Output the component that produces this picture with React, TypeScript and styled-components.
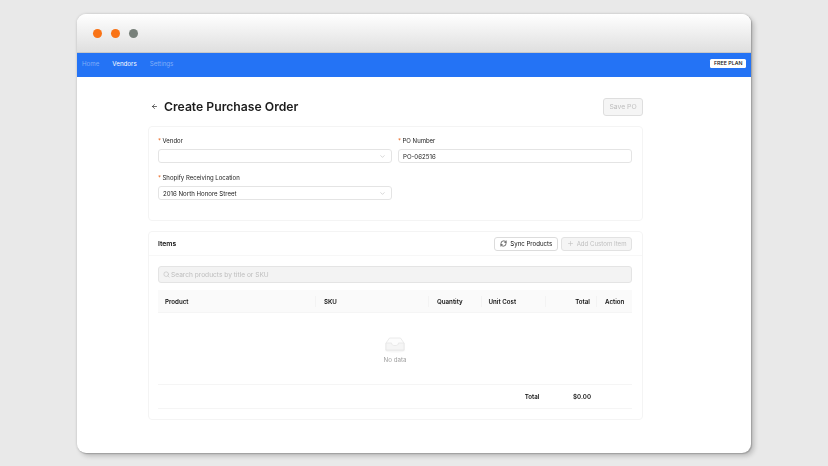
import React from "react";
import styled, { createGlobalStyle } from "styled-components";
import { ArrowLeft, ChevronDown, RefreshCw, Plus, Search } from "lucide-react";

const Global = createGlobalStyle`
  html, body { margin: 0; padding: 0; }
  body { width: 828px; height: 466px; overflow: hidden; background: #e9e9e9; font-family: Inter, "Liberation Sans", sans-serif; }
`;

const Stage = styled.div`
  width: 828px;
  height: 466px;
  padding: 14px 77px 13px;
  box-sizing: border-box;
  background: #e9e9e9;
`;
const Win = styled.div`
  height: 439px;
  border-radius: 9px;
  overflow: hidden;
  background: #fff;
  display: flex;
  flex-direction: column;
  filter: blur(0.3px);
  box-shadow: 1px 1px 1px #a0a0a0, 3px 3px 5px rgba(0, 0, 0, 0.2), 0 0 3px rgba(0, 0, 0, 0.18);
`;
const TitleBar = styled.div`
  height: 39px;
  flex: none;
  display: flex;
  align-items: center;
  gap: 9px;
  padding-left: 16px;
  box-sizing: border-box;
  background: linear-gradient(#ffffff, #dfdfdf);
  border-bottom: 1px solid #c8c8c8;
`;
const Dot = styled.span<{ $c: string }>`
  width: 9px;
  height: 9px;
  border-radius: 50%;
  background: ${(p) => p.$c};
`;
const Nav = styled.nav`
  height: 24px;
  flex: none;
  display: flex;
  align-items: center;
  padding: 0 5px 3px;
  box-sizing: border-box;
  background: #2473f5;
`;
const NavItem = styled.span<{ $active?: boolean }>`
  font-size: 6.2px;
  margin-right: 13px;
  color: ${(p) => (p.$active ? "#ffffff" : "rgba(255,255,255,0.42)")};
`;
const Plan = styled.span`
  margin-left: auto;
  background: #fff;
  color: #111;
  font-size: 5.3px;
  font-weight: 500;
  line-height: 9px;
  padding: 0 3.5px;
  border-radius: 1.5px;
`;
const Main = styled.main`
  width: 495px;
  margin-left: 71px;
  display: flex;
  flex-direction: column;
`;
const Head = styled.div`
  height: 49px;
  display: flex;
  align-items: center;
  gap: 6px;
  color: #1c1c1c;
  padding-top: 11px;
  padding-bottom: 1px;
  box-sizing: border-box;
`;
const Title = styled.h1`
  margin: 0;
  font-size: 12.2px;
  font-weight: 600;
  flex: 1;
`;
const Save = styled.button`
  width: 40px;
  height: 18px;
  padding: 0;
  font: 400 6.8px Inter, sans-serif;
  color: #bdbdbd;
  background: #f5f5f5;
  border: 1px solid #dedede;
  border-radius: 3px;
`;
const Card = styled.section`
  border: 1px solid #f4f4f4;
  border-radius: 4px;
  box-sizing: border-box;
`;
const FormCard = styled(Card)`
  height: 95px;
  padding: 8px 9px 9px;
  display: grid;
  grid-template-columns: 234px 234px;
  column-gap: 6px;
  grid-auto-rows: 37px;
`;
const Field = styled.div`
  display: flex;
  flex-direction: column;
  gap: 3px;
`;
const Label = styled.label`
  font-size: 6px;
  line-height: 11px;
  color: #222;
  &::before {
    content: "*";
    color: #e8590c;
    margin-right: 1.5px;
  }
`;
const Control = styled.div`
  height: 14px;
  border: 1px solid #e4e4e4;
  border-radius: 3px;
  box-sizing: border-box;
  display: flex;
  align-items: center;
  justify-content: space-between;
  padding: 0 5px 0 4px;
  font-size: 6.1px;
  color: #222;
  background: #fff;
`;
const ItemsCard = styled(Card)`
  margin-top: 10px;
  height: 189px;
`;
const ItemsHead = styled.div`
  height: 24px;
  padding: 0 10px 0 9px;
  display: flex;
  align-items: center;
  gap: 3px;
  box-sizing: border-box;
  border-bottom: 1px solid #f7f7f7;
`;
const ItemsTitle = styled.h2`
  margin: 0;
  flex: 1;
  font-size: 6.8px;
  font-weight: 600;
  color: #111;
`;
const Btn = styled.button<{ $off?: boolean }>`
  height: 14px;
  padding: 0 ${(p) => (p.$off ? "4.5px" : "5px")};
  display: flex;
  align-items: center;
  gap: 3px;
  font: 400 6.1px Inter, sans-serif;
  border-radius: 3px;
  border: 1px solid ${(p) => (p.$off ? "#e2e2e2" : "#dcdcdc")};
  background: ${(p) => (p.$off ? "#f5f5f5" : "#fff")};
  color: ${(p) => (p.$off ? "#c0c0c0" : "#111")};
`;
const Body = styled.div`
  padding: 10px 10px 0 9px;
`;
const SearchBox = styled.div`
  height: 17px;
  border: 1px solid #e4e4e4;
  border-radius: 3px;
  background: #f3f3f3;
  box-sizing: border-box;
  display: flex;
  align-items: center;
  gap: 1px;
  padding: 0 4px;
  font-size: 6.6px;
  color: #bdbdbd;
`;
const HeadRow = styled.div`
  margin-top: 7px;
  height: 23px;
  background: #fafafa;
  display: grid;
  grid-template-columns: 158px 113px 52.5px 64px 51.5px 35px;
  align-items: center;
  border-bottom: 1px solid #f5f5f5;
  box-sizing: border-box;
`;
const Th = styled.div<{ $right?: boolean; $last?: boolean; $pad?: number }>`
  height: 11px;
  line-height: 11px;
  font-size: 6.2px;
  font-weight: 600;
  color: #111;
  box-sizing: border-box;
  padding: 0 ${(p) => (p.$right ? "6px" : "0")} 0 ${(p) => (p.$right ? "0" : `${p.$pad ?? 8}px`)};
  text-align: ${(p) => (p.$right ? "right" : "left")};
  border-right: ${(p) => (p.$last ? "none" : "1px solid #f3f3f3")};
`;
const Empty = styled.div`
  height: 72px;
  display: flex;
  flex-direction: column;
  align-items: center;
  justify-content: flex-end;
  padding-bottom: 21px;
  box-sizing: border-box;
  gap: 3px;
  font-size: 6.2px;
  color: #a0a0a0;
  border-bottom: 1px solid #f5f5f5;
`;
const FootRow = styled.div`
  height: 24px;
  display: grid;
  grid-template-columns: 158px 113px 52.5px 64px 51.5px 35px;
  align-items: center;
  border-bottom: 1px solid #f5f5f5;
  box-sizing: border-box;
`;
const FootCell = styled.div<{ $col: number; $pad: number }>`
  grid-column: ${(p) => p.$col};
  text-align: right;
  padding-right: ${(p) => p.$pad}px;
  font-size: 6.2px;
  font-weight: 600;
  color: #111;
`;

const InboxIcon = () => (
  <svg width="22" height="17" viewBox="0 0 22 17" fill="none">
    <ellipse cx="11" cy="14.6" rx="10.5" ry="2" fill="#f7f7f7" />
    <path d="M5.5 2h11L20 7v7H2V7z" fill="#fcfcfc" stroke="#e6e6e6" strokeWidth="0.8" />
    <path d="M2 7h5.5c0 1.8 1.5 2.6 3.5 2.6s3.5-.8 3.5-2.6H20v7H2z" fill="#f5f5f5" stroke="#e6e6e6" strokeWidth="0.8" />
  </svg>
);

export default function App() {
  return (
    <Stage>
      <Global />
      <Win>
        <TitleBar>
          <Dot $c="#f97316" />
          <Dot $c="#f97316" />
          <Dot $c="#78807a" />
        </TitleBar>
        <Nav>
          <NavItem>Home</NavItem>
          <NavItem $active>Vendors</NavItem>
          <NavItem>Settings</NavItem>
          <Plan>FREE PLAN</Plan>
        </Nav>
        <Main>
          <Head>
            <ArrowLeft size={7} strokeWidth={2.2} style={{ marginLeft: 3 }} />
            <Title>Create Purchase Order</Title>
            <Save>Save PO</Save>
          </Head>
          <FormCard>
            <Field>
              <Label>Vendor</Label>
              <Control>
                <span />
                <ChevronDown size={7} color="#bbb" />
              </Control>
            </Field>
            <Field>
              <Label>PO Number</Label>
              <Control>PO-062516</Control>
            </Field>
            <Field>
              <Label>Shopify Receiving Location</Label>
              <Control>
                2016 North Honore Street
                <ChevronDown size={7} color="#bbb" />
              </Control>
            </Field>
          </FormCard>
          <ItemsCard>
            <ItemsHead>
              <ItemsTitle>Items</ItemsTitle>
              <Btn>
                <RefreshCw size={7} />
                Sync Products
              </Btn>
              <Btn $off>
                <Plus size={7} />
                Add Custom Item
              </Btn>
            </ItemsHead>
            <Body>
              <SearchBox>
                <Search size={7} />
                Search products by title or SKU
              </SearchBox>
              <HeadRow>
                <Th $pad={7}>Product</Th>
                <Th>SKU</Th>
                <Th>Quantity</Th>
                <Th $pad={7}>Unit Cost</Th>
                <Th $right>Total</Th>
                <Th $last>Action</Th>
              </HeadRow>
              <Empty>
                <InboxIcon />
                No data
              </Empty>
              <FootRow>
                <FootCell $col={4} $pad={6}>Total</FootCell>
                <FootCell $col={5} $pad={6}>$0.00</FootCell>
              </FootRow>
            </Body>
          </ItemsCard>
        </Main>
      </Win>
    </Stage>
  );
}
